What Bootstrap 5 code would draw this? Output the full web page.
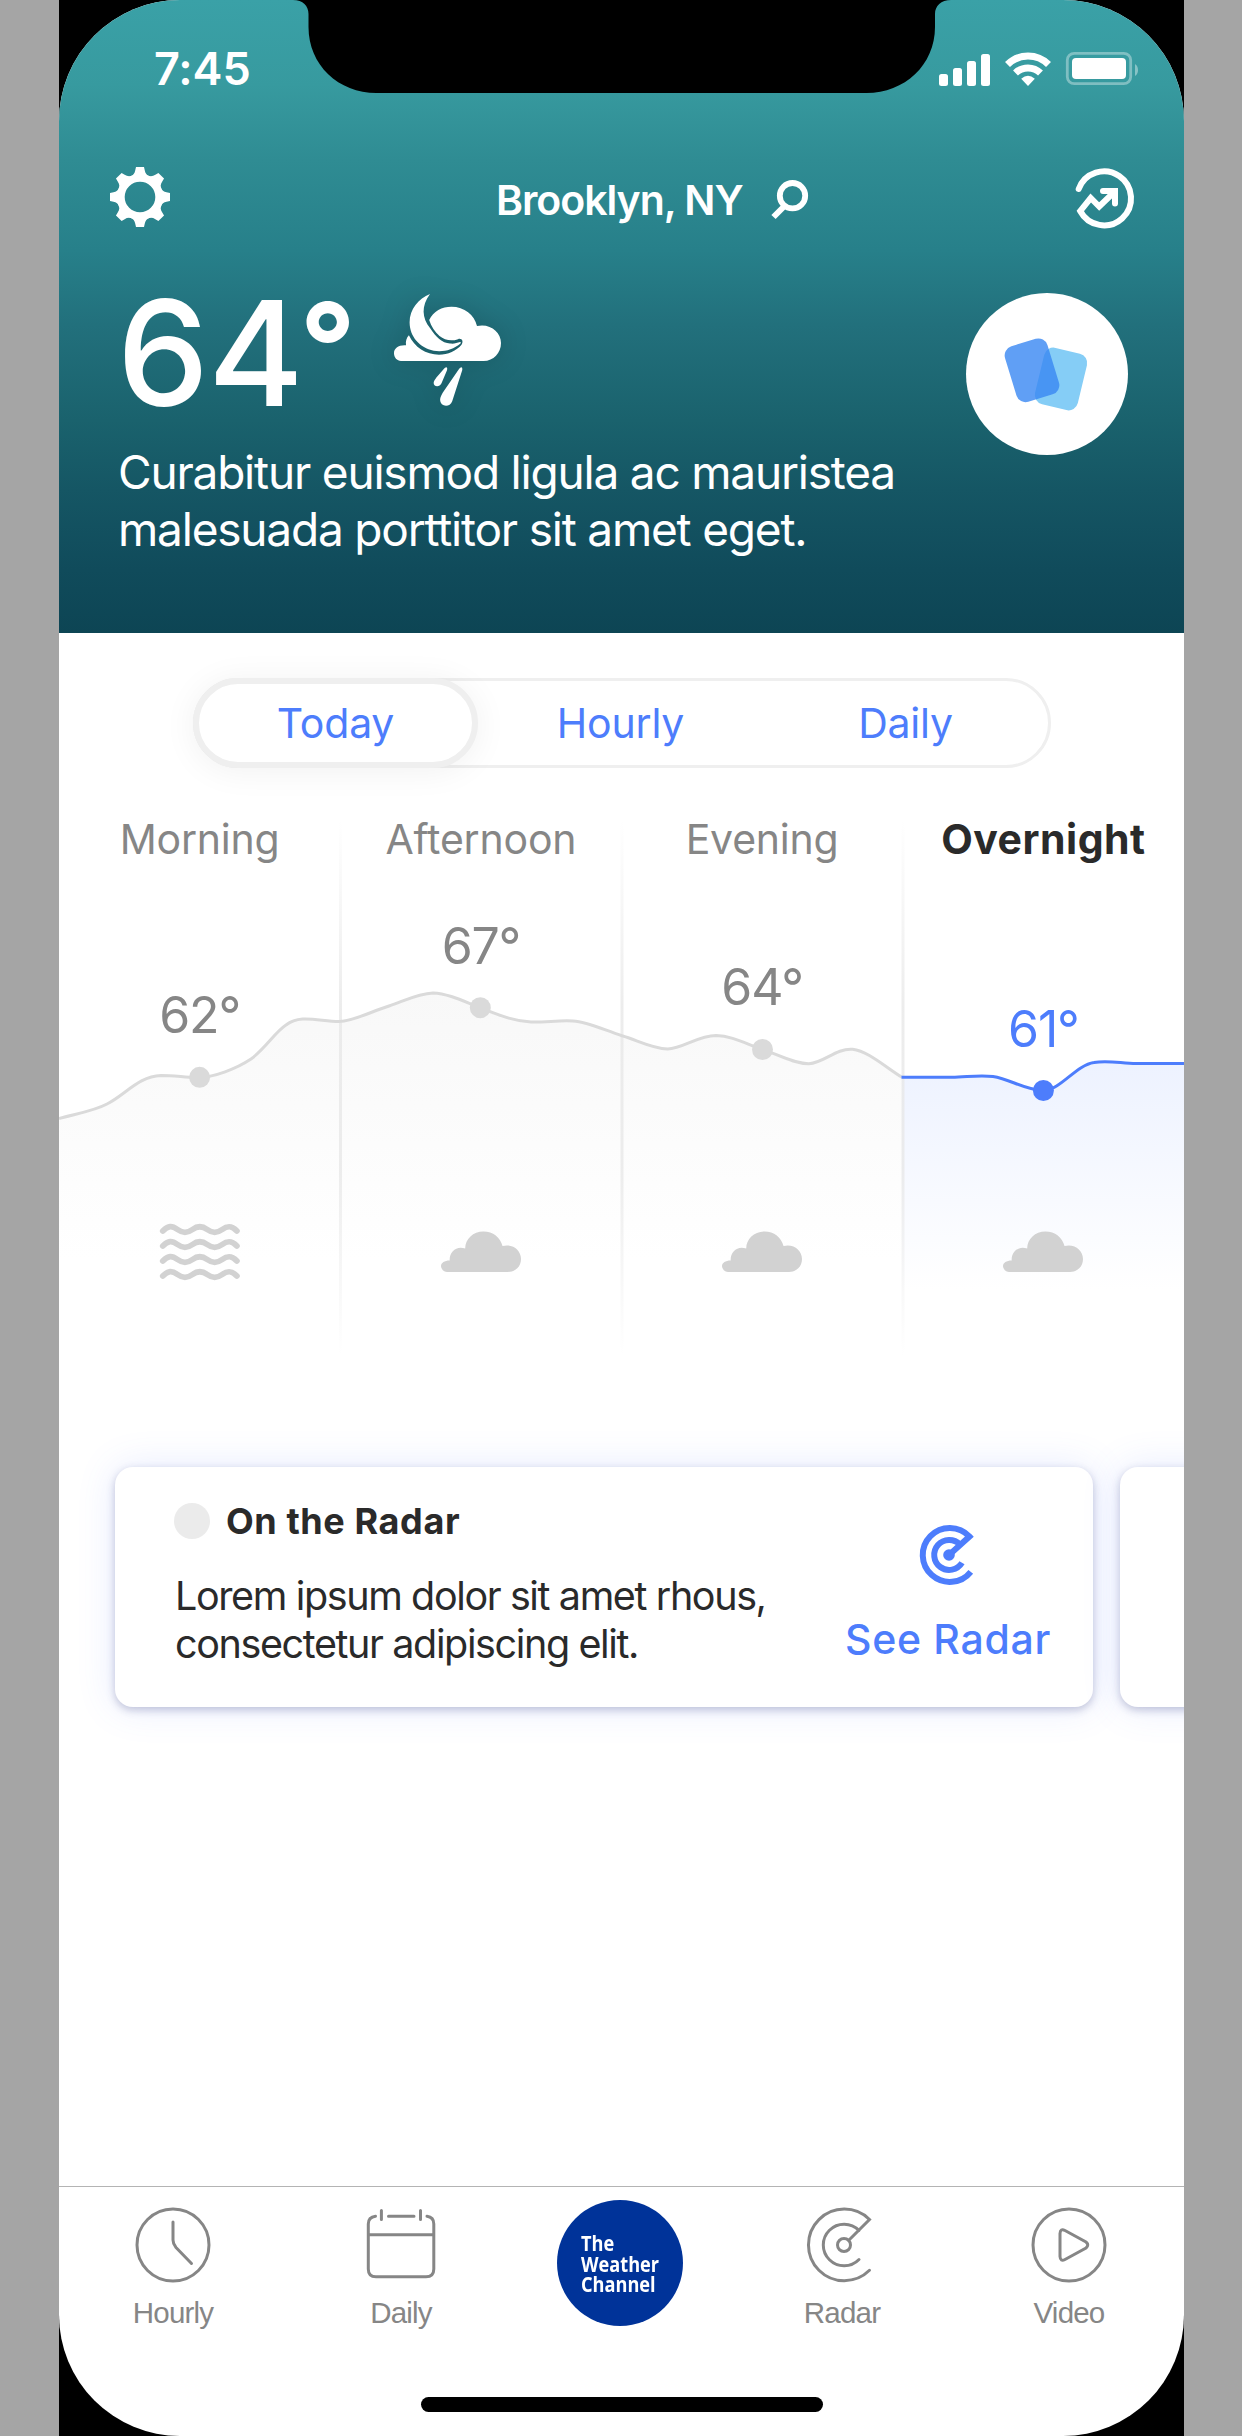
<!DOCTYPE html>
<html lang="en">
<head>
<meta charset="utf-8">
<meta name="viewport" content="width=device-width, initial-scale=1">
<title>Weather – Brooklyn, NY</title>
<link href="https://cdn.jsdelivr.net/npm/bootstrap@5.3.0/dist/css/bootstrap.min.css" rel="stylesheet">
<style>
  html, body { margin: 0; background: #a5a5a5; }
  body { font-family: Inter, "Liberation Sans", sans-serif; width: 1242px; height: 2436px; overflow: hidden; padding-left: 59px; }
  svg { display: block; flex: none; overflow: visible; }
  .phone { width: 1125px; height: 2436px; background: #000; }
  .screen { height: 2436px; border-radius: 121px; background: #fff; }
  .hero { height: 633px; background: linear-gradient(180deg, #3aa1a7 0, #379a9f 85px, #2f8c93 160px, #27808a 250px, #22707c 325px, #1a626d 420px, #155664 490px, #104b5b 570px, #0d4554 633px); }
  .notch { top: 0; left: 234px; }
  .statusbar { height: 166px; padding: 44px 45px 0 95px; }
  .clock { font-size: 45px; line-height: 50px; font-weight: 600; letter-spacing: -.1px; }
  .statusbar svg { margin-top: 7px; }
  .topbar { height: 62px; padding: 1px 50px 0 51px; }
  .place { font-size: 41px; line-height: 50px; font-weight: 600; width: 275px; margin: 8px 0 0 326px; letter-spacing: -1.02px; white-space: nowrap; }
  .search { margin-top: 13px; }
  .now { height: 215px; padding: 65px 56px 0 58px; }
  .temp-now { font-size: 146px; line-height: 146px; font-weight: 500; margin-top: -13px; width: 276px; letter-spacing: -1px; }
  .deg { display: inline-block; font-size: 122px; line-height: 122px; font-weight: 700; vertical-align: 16px; margin-left: -3px; }
  .wx { filter: drop-shadow(0 0 14px rgba(0,0,0,.14)); }
  .summary { font-size: 46px; line-height: 57px; padding: 1px 0 0 59px; letter-spacing: -1.2px; white-space: nowrap; }
  .round-btn { width: 162px; height: 162px; }
  .seg { width: 858px; height: 90px; border: 3px solid #efefef; border-radius: 45px; margin: 45px 0 0 134px; }
  .seg-item { width: 286px; height: 90px; margin: -3px 0; border-radius: 45px; color: #4d7dfc; font-size: 41px; line-height: 91px; text-align: center; letter-spacing: -.2px; }
  .seg-item.on { margin-left: -3px; border: 6px solid #efefef; line-height: 79px; background: #fff; box-shadow: 0 3px 34px rgba(0,0,0,.06); }
  .chart { height: 562px; margin-top: 40px; }
  .chart > svg { top: 0; left: 0; }
  .part { width: 281.25px; color: #868686; height: 464px; }
  .part-name { font-size: 41px; line-height: 50px; padding-top: 6px; letter-spacing: -.2px; }
  .part-temp { font-size: 50px; line-height: 60px; letter-spacing: -1.2px; }
  .part.now-part .part-name { color: #2a2a2a; font-weight: 700; letter-spacing: .5px; }
  .part.now-part .part-temp { color: #4d7dfc; }
  .cards { padding-left: 56px; gap: 27px; margin-top: 97px; }
  .tile { flex: none; width: 978px; height: 240px; border-radius: 18px; background: #fff; color: #2a2a2a; box-shadow: 0 3px 8px rgba(50,58,120,.28), 0 0 38px rgba(80,115,255,.15); }
  .tile-main { padding: 32px 0 0 59px; width: 725px; white-space: nowrap; }
  .bullet { width: 36px; height: 36px; background: #ebebeb; }
  .tile-title { font-size: 36px; line-height: 44px; font-weight: 700; letter-spacing: .6px; margin-left: 16px; }
  .tile-text { font-size: 39.5px; line-height: 48px; margin-top: 29px; letter-spacing: -1.38px; padding-left: 1px; }
  .tile-act { color: #4d7dfc; font-size: 41px; line-height: 50px; font-weight: 500; white-space: nowrap; width: 220px; padding: 58px 4px 0 0; letter-spacing: .7px; }
  .tile-act span { margin-top: 29px; }
  .tabbar { height: 250px; margin-top: 479px; border-top: 1px solid #b4b4b4; font-family: "Liberation Sans", sans-serif; font-size: 29.5px; line-height: 34px; letter-spacing: -.8px; }
  .tab { width: 160px; padding-top: 19px; color: #868686; }
  .tab svg { margin-bottom: 12px; }
  .brand { width: 126px; height: 126px; background: #003399; color: #fff; font: 700 21px/20.6px "Open Sans", "Noto Sans", sans-serif; letter-spacing: 0; padding: 2px 0 0 24px; }
  .brand span { display: inline-block; transform: scaleX(.865); transform-origin: left center; }
  .homebar { width: 402px; height: 15px; border-radius: 7.5px; left: 362px; bottom: 24px; }
</style>
</head>
<body>
<main class="phone">
 <div class="screen position-relative overflow-hidden d-flex flex-column">
  <header class="hero text-white flex-shrink-0">
    <div class="statusbar d-flex justify-content-between align-items-start">
      <span class="clock">7:45</span>
      <svg width="201" height="36" viewBox="939 51 201 36">
        <g fill="#fff">
          <rect x="940" y="74" width="9" height="12" rx="2.5"/><rect x="954" y="68" width="9" height="18" rx="2.5"/>
          <rect x="968" y="61" width="9" height="25" rx="2.5"/><rect x="982" y="54" width="9" height="32" rx="2.5"/>
          <path d="M1029 86l-6.800-7.200q6.800-6 13.600 0z"/>
          <rect x="1073" y="58" width="54" height="21" rx="4"/>
        </g>
        <g fill="none" stroke="#fff" stroke-width="7">
          <path d="M1008.500 64.500a29 29 0 0 1 41 0"/><path d="M1016.500 73a18 18 0 0 1 25 0"/>
        </g>
        <rect x="1068.300" y="53.300" width="63.400" height="30.400" rx="7" fill="none" stroke="#fff" stroke-opacity=".36" stroke-width="2.800"/>
        <path d="M1136 64q3 2 3 6t-3 6z" fill="#fff" fill-opacity=".4"/>
      </svg>
    </div>
    <div class="topbar d-flex align-items-start">
      <svg width="60" height="60" viewBox="-30 -30 60 60" aria-label="Settings">
        <circle r="19.200" fill="none" stroke="#fff" stroke-width="7.800"/>
        <g fill="#fff">
          <g id="teeth"><path id="tooth" d="M-9.500 -20.500Q-5.500-22.500-4.800-26.500L-4-30H4L4.800-26.500Q5.500-22.500 9.500-20.500z"/><use href="#tooth" transform="rotate(90)"/><use href="#tooth" transform="rotate(180)"/><use href="#tooth" transform="rotate(270)"/></g>
          <use href="#teeth" transform="rotate(45)"/>
        </g>
      </svg>
      <span class="place">Brooklyn, NY</span>
      <svg class="search" width="38" height="40" viewBox="772 180 38 40">
        <circle cx="793.500" cy="195.700" r="12.700" fill="none" stroke="#fff" stroke-width="5.800"/>
        <path d="M786 205.500L774.500 217" stroke="#fff" stroke-width="6"/>
      </svg>
      <svg class="ms-auto" width="60" height="62" viewBox="1074 167 60 62" fill="none" stroke="#fff" stroke-width="6" stroke-linecap="round">
        <path d="M1078.700 189a27 27 0 1 1 1.500 22l10.500-13 8.500 8.500 14-13.500"/>
        <path d="M1103 191h12v12.500"/>
      </svg>
    </div>
    <div class="now d-flex align-items-start">
      <span class="temp-now">64<span class="deg">°</span></span>
      <svg class="wx" width="110" height="114" viewBox="393 293 110 114" fill="#fff">
        <path d="M430 294c-9 12-8 24 0 34 6 9 12 15 20 15.500 4 .5 7-.5 10-1.500q1.500.5.700 1.300c-8 7-18 9-27 7.500-14-3-24-14-24.100-28.500 0-13 9-24 20.400-28.300z"/>
        <path d="M429.200 320c4-9 13-13.300 22.200-13.300 13 0 23 8 25.600 19.300 13-3 24 6 24 17 0 10-7.500 18-17.400 18h-82.600c-4 0-7-3.500-7-7.700 0-5 4.500-8.500 12-8-.5-4 .5-7.500 2.900-10 5.600 12 17 19.400 30.100 19.400 9 0 17.500-4 22.500-10 2.500-3.500 0-7-3.500-5.500-7 2.500-13.500.8-18.500-3.200-4.500-4-8.300-9.500-10.300-16z"/>
        <path d="M446.200 367.300q1.500 0 .8 3l-5.500 13c-2 4.500-8.500 3.500-7.800-1 .3-1.500 1.500-3 2.500-4.500l7.800-9q1-1.500 2.200-1.500z"/>
        <path d="M461.400 367.300q1.300.3.800 3l-10 31c-2.500 7-13 5.500-12-2.500.3-2 1.500-4 2.500-6l16.500-24q1-1.500 2.200-1.500z"/>
      </svg>
      <div class="round-btn ms-auto rounded-circle bg-white">
        <svg width="162" height="162" viewBox="966 293 162 162">
          <rect x="-22" y="-29" width="44" height="58" rx="9.500" fill="#85cdf6" transform="translate(1061 379) rotate(13.500)"/>
          <rect x="-22.200" y="-29" width="44.400" height="58" rx="9.500" fill="rgba(56,135,243,.8)" transform="translate(1032 370.300) rotate(-17)"/>
        </svg>
      </div>
    </div>
    <p class="summary m-0">Curabitur euismod ligula ac mauristea<br>malesuada porttitor sit amet eget.</p>
  </header>
  <svg class="notch position-absolute" width="658" height="93" viewBox="293 0 658 93"><path d="M293 0c10 0 15.500 6 15.500 14v13c0 38 30 66 68 66h490c38 0 68.500-28 68.500-66V14c0-8 6-14 16-14z"/></svg>

  <nav class="seg d-flex flex-shrink-0">
    <a class="seg-item on text-decoration-none">Today</a>
    <a class="seg-item text-decoration-none">Hourly</a>
    <a class="seg-item text-decoration-none">Daily</a>
  </nav>

  <section class="chart position-relative flex-shrink-0 d-flex">
    <svg class="position-absolute" width="1125" height="562" viewBox="59 808 1125 562">
      <defs>
        <linearGradient id="ga" gradientUnits="userSpaceOnUse" x1="0" y1="990" x2="0" y2="1260"><stop offset="0" stop-color="#f8f8f8"/><stop offset="1" stop-color="#fff"/></linearGradient>
        <linearGradient id="gb" gradientUnits="userSpaceOnUse" x1="0" y1="1060" x2="0" y2="1290"><stop offset="0" stop-color="#edf2ff"/><stop offset="1" stop-color="#fff"/></linearGradient>
        <linearGradient id="gl" gradientUnits="userSpaceOnUse" x1="0" y1="820" x2="0" y2="1355"><stop offset="0" stop-color="#e8e8e8" stop-opacity="0"/><stop offset=".35" stop-color="#e8e8e8" stop-opacity=".8"/><stop offset=".65" stop-color="#e8e8e8" stop-opacity=".8"/><stop offset="1" stop-color="#e8e8e8" stop-opacity="0"/></linearGradient>
      </defs>
      <path fill="url(#ga)" d="M59 1118.600C75 1114 94 1111 107 1104C125 1095 139 1076 161 1075.500C176 1075.500 188 1078 199.600 1077.400C214 1077 236 1069 251 1059C266 1048 275 1032 286 1025C300 1014 318 1021 339 1021.600C354 1021 370 1012 389 1006C404 1001 418 993.500 433 993C448 993.500 463 1001 480 1007.700C497 1014 512 1021 531 1022C545 1022.500 560 1020 573 1021C588 1022 604 1030 622 1035.700C637 1040 652 1048.500 667.600 1049C683 1048.500 698 1035.500 716 1035.500C733 1036 746 1044 762.600 1049.500C777 1054 794 1064 809 1063.700C824 1063 836 1048 852.600 1049.300C868 1051 884 1066 902 1077.300V1345H59z"/>
      <path fill="url(#gb)" d="M902 1077.300H952C966 1077.300 978 1074.500 993 1076.500C1010 1079 1026 1090.500 1043.500 1090.500C1060 1090.500 1076 1065 1094 1062.500C1108 1060 1122 1063.500 1136 1063.500H1184V1345H902z"/>
      <g fill="url(#gl)"><rect x="339" y="820" width="3" height="535"/><rect x="620.500" y="820" width="3" height="535"/><rect x="901.500" y="820" width="3" height="535"/></g>
      <path fill="none" stroke="#dadada" stroke-width="3" d="M59 1118.600C75 1114 94 1111 107 1104C125 1095 139 1076 161 1075.500C176 1075.500 188 1078 199.600 1077.400C214 1077 236 1069 251 1059C266 1048 275 1032 286 1025C300 1014 318 1021 339 1021.600C354 1021 370 1012 389 1006C404 1001 418 993.500 433 993C448 993.500 463 1001 480 1007.700C497 1014 512 1021 531 1022C545 1022.500 560 1020 573 1021C588 1022 604 1030 622 1035.700C637 1040 652 1048.500 667.600 1049C683 1048.500 698 1035.500 716 1035.500C733 1036 746 1044 762.600 1049.500C777 1054 794 1064 809 1063.700C824 1063 836 1048 852.600 1049.300C868 1051 884 1066 902 1077.300"/>
      <path fill="none" stroke="#4d7dfc" stroke-width="3" d="M901.500 1077.300H952C966 1077.300 978 1074.500 993 1076.500C1010 1079 1026 1090.500 1043.500 1090.500C1060 1090.500 1076 1065 1094 1062.500C1108 1060 1122 1063.500 1136 1063.500H1184"/>
      <g fill="#dadada"><circle cx="199.600" cy="1077.300" r="10.500"/><circle cx="480.300" cy="1007.700" r="10.500"/><circle cx="762.500" cy="1049.500" r="10.500"/></g>
      <circle cx="1043.400" cy="1090.500" r="10.500" fill="#4d7dfc"/>
    </svg>
    <div class="part position-relative d-flex flex-column align-items-center">
      <span class="part-name">Morning</span>
      <span class="part-temp" style="margin-top:121px">62°</span>
      <svg class="mt-auto" width="80" height="48" viewBox="160 1224 80 48" fill="none" stroke="#d2d2d2" stroke-width="5.800" stroke-linecap="round">
        <g id="wv"><path id="w" d="M162.800 1231c5.500-5.500 9-5.500 14.700-1.500 5.500 4 9.500 4 15 0 5-3.700 9.500-3.700 14.700 0 5.500 4 9.500 4 15 0 5.500-4 9.500-4 14.700 1.500"/><use href="#w" y="15"/></g><use href="#wv" y="30"/>
      </svg>
    </div>
    <div class="part position-relative d-flex flex-column align-items-center">
      <span class="part-name">Afternoon</span>
      <span class="part-temp" style="margin-top:52px">67°</span>
      <svg class="mt-auto" width="80" height="44" viewBox="441 1228.500 80 44" fill="#d2d2d2"><path id="cloud" d="M447 1272.500a6 6 0 0 1-6-5.800c0-3.400 3.500-5.700 8.700-5.700-.5-7 4.500-12.800 11-12.800q2.200 0 4.500.8c0-9.500 8-17 18.300-17 9.500 0 17 6 19 14.500 10-2.500 18.500 4 18.500 13 0 7.500-5.500 13-13 13z"/></svg>
    </div>
    <div class="part position-relative d-flex flex-column align-items-center">
      <span class="part-name">Evening</span>
      <span class="part-temp" style="margin-top:93px">64°</span>
      <svg class="mt-auto" width="80" height="44" viewBox="441 1228.500 80 44" fill="#d2d2d2"><use href="#cloud"/></svg>
    </div>
    <div class="part now-part position-relative d-flex flex-column align-items-center">
      <span class="part-name">Overnight</span>
      <span class="part-temp" style="margin-top:135px">61°</span>
      <svg class="mt-auto" width="80" height="44" viewBox="441 1228.500 80 44" fill="#d2d2d2"><use href="#cloud"/></svg>
    </div>
  </section>

  <section class="cards d-flex flex-shrink-0">
    <article class="tile d-flex">
      <div class="tile-main">
        <div class="d-flex align-items-center"><span class="bullet rounded-circle"></span><span class="tile-title">On the Radar</span></div>
        <p class="tile-text mb-0">Lorem ipsum dolor sit amet rhous,<br>consectetur adipiscing elit.</p>
      </div>
      <a class="tile-act d-flex flex-column align-items-center text-decoration-none">
        <svg width="56" height="60" viewBox="-29 -30 56 60" fill="none" stroke="#4d7dfc" stroke-width="6">
          <path d="M21.800 16.800A27 27 0 1 1 20.500 -18.500L0 0"/><path d="M13 7.800A15 15 0 1 1 11 -10.500"/><circle r="5.800" fill="#4d7dfc" stroke="none"/>
        </svg>
        <span>See Radar</span>
      </a>
    </article>
    <article class="tile"></article>
  </section>

  <nav class="tabbar d-flex flex-shrink-0 align-items-start">
    <a class="tab d-flex flex-column align-items-center text-decoration-none" style="margin-left:34px">
      <svg width="78" height="78" viewBox="-39 -39 78 78" fill="none" stroke="#868686" stroke-width="3" stroke-linecap="round"><circle r="36"/><path d="M0-23V-5Q0-1 3 2.500L18.500 18.500"/></svg>
      <span>Hourly</span>
    </a>
    <a class="tab d-flex flex-column align-items-center text-decoration-none" style="margin-left:68px">
      <svg width="78" height="78" viewBox="362 2206 78 78" fill="none" stroke="#868686" stroke-width="3" stroke-linecap="round"><path d="M375.500 2216.200Q368.300 2217 368.300 2224V2269Q368.300 2276.800 376 2276.800H426Q433.800 2276.800 433.800 2269V2224Q433.800 2217 427 2216.200M368.300 2234.700H433.800M388.500 2216.200H414M381.400 2210.500V2219.500M420.500 2210.500V2219.500"/></svg>
      <span>Daily</span>
    </a>
    <div class="brand rounded-circle d-flex align-items-center" style="margin:13px 0 0 76px"><span>The<br>Weather<br>Channel</span></div>
    <a class="tab d-flex flex-column align-items-center text-decoration-none" style="margin-left:79px">
      <svg width="78" height="78" viewBox="-41 -39 78 78" fill="none" stroke="#868686" stroke-width="3" stroke-linecap="round"><path d="M25.500 25.300A35.800 35.800 0 1 1 25.500-25.500L4.800-4.800M15 14.500A20.800 20.800 0 1 1 15-14.500"/><circle r="6.500"/></svg>
      <span>Radar</span>
    </a>
    <a class="tab d-flex flex-column align-items-center text-decoration-none" style="margin-left:67px">
      <svg width="78" height="78" viewBox="-39 -39 78 78" fill="none" stroke="#868686" stroke-width="3" stroke-linecap="round"><circle r="36"/><path d="M-9-11.500Q-8.700-17-4-14.500L17-3Q20.500 0 17 3L-4 14.500Q-8.700 17-9 11.500z"/></svg>
      <span>Video</span>
    </a>
  </nav>
  <div class="homebar position-absolute bg-black"></div>
 </div>
</main>
<script src="https://cdn.jsdelivr.net/npm/bootstrap@5.3.0/dist/js/bootstrap.bundle.min.js"></script>
</body>
</html>
